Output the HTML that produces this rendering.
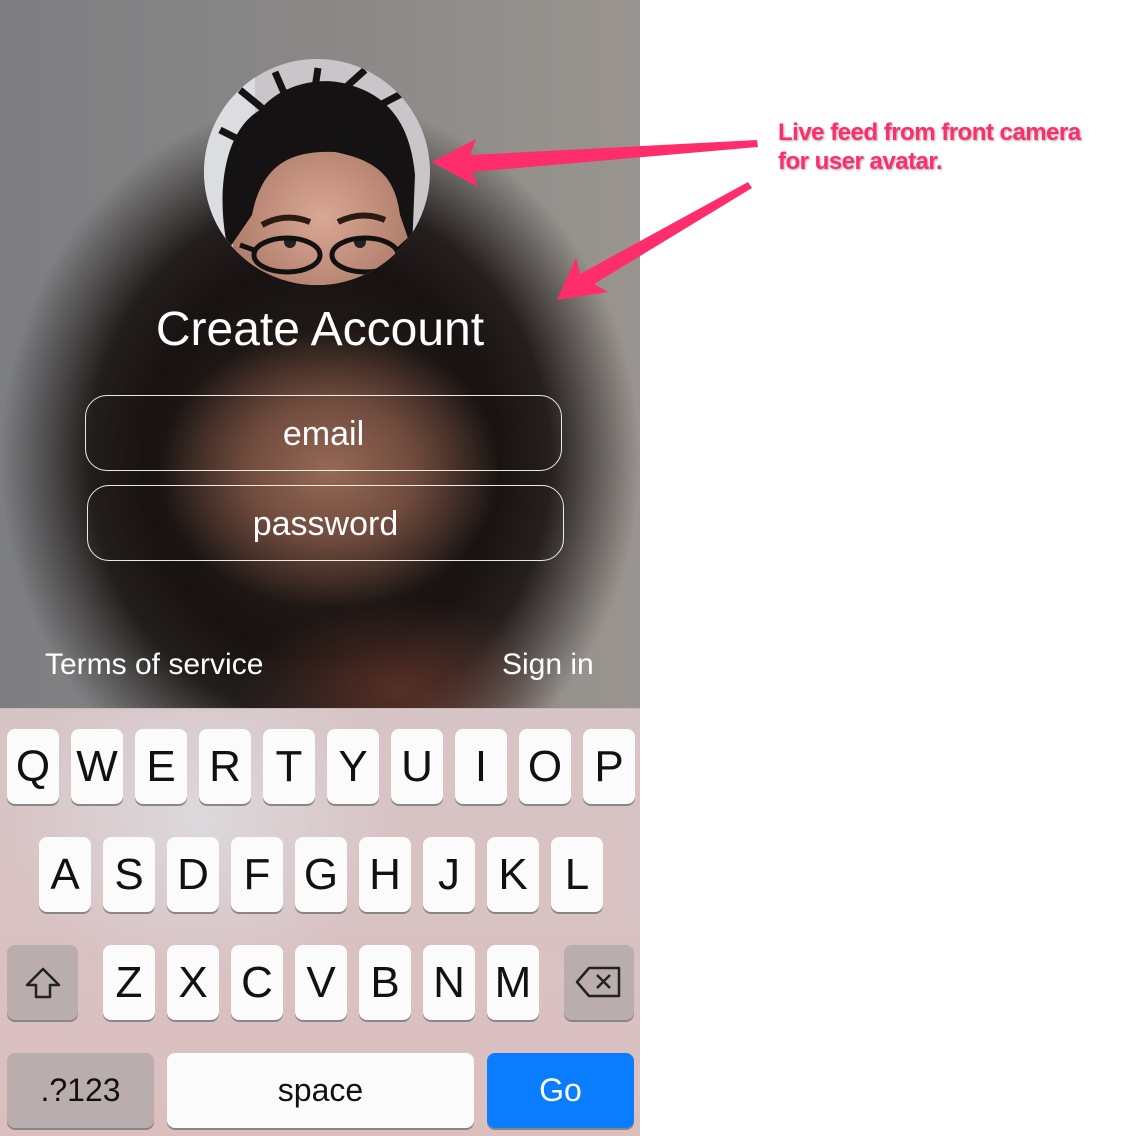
<!DOCTYPE html>
<html><head><style>
*{margin:0;padding:0;box-sizing:border-box}
body{width:1132px;height:1136px;background:#fff;position:relative;overflow:hidden;font-family:"Liberation Sans",sans-serif}
#app{position:absolute;left:0;top:0;width:640px;height:1136px;overflow:hidden}
#bg{position:absolute;left:0;top:0;width:640px;height:708px;
background:
radial-gradient(ellipse 170px 140px at 330px 470px, rgba(150,105,85,1) 0%, rgba(120,80,65,.9) 50%, rgba(120,80,65,0) 100%),
radial-gradient(ellipse 160px 90px at 400px 690px, rgba(95,50,40,.85), rgba(95,50,40,0)),
radial-gradient(ellipse 320px 360px at 320px 460px, #2a201c 0%, #181312 55%, rgba(24,19,18,0.9) 72%, rgba(24,19,18,0) 100%),
linear-gradient(90deg,#7d7e81 0%,#8a8887 50%,#99948f 100%);}
.t{position:absolute;color:#fff;font-weight:300}
.field{position:absolute;border:1.5px solid rgba(255,255,255,.9);border-radius:22px;color:#fff;text-align:center;font-size:34px;font-weight:300}
#kb{position:absolute;left:0;top:708px;width:640px;height:428px;
background:radial-gradient(ellipse 200px 160px at 200px 110px,#dcd9dc,rgba(220,217,220,0)),linear-gradient(180deg,#d7c4c6,#dbbfbf);border-top:1px solid #c9b9b9}
.k{position:absolute;width:52px;height:75px;background:#fbfbfb;border-radius:8px;box-shadow:0 2px 0 #8c8585;font-size:44px;text-align:center;line-height:75px;color:#111;font-weight:300}
.g{background:#b9adae}
</style></head><body>
<div id="app">
<div id="bg"></div>
<svg style="position:absolute;left:0;top:0" width="640" height="708">
<defs><clipPath id="c"><circle cx="317" cy="172" r="113"/></clipPath>
<radialGradient id="sk" cx="50%" cy="40%" r="60%"><stop offset="0" stop-color="#d9a894"/><stop offset="1" stop-color="#a97562"/></radialGradient></defs>
<g clip-path="url(#c)">
<rect x="200" y="55" width="240" height="240" fill="#c8c6c8"/>
<rect x="200" y="55" width="55" height="240" fill="#dcdde0"/>
<ellipse cx="322" cy="235" rx="90" ry="85" fill="url(#sk)"/>
<path d="M228 250 C215 190 225 130 260 110 C280 85 320 75 350 85 C385 95 410 120 415 175 L412 250 L400 215 C395 175 375 160 335 152 C290 150 262 165 252 215 Z" fill="#141212"/>
<path d="M262 108 L240 90 M285 95 L275 72 M315 88 L318 68 M345 88 L365 70 M380 105 L405 92 M240 140 L220 130" stroke="#141212" stroke-width="7"/>
<path d="M262 225 Q285 212 310 222 M338 222 Q362 210 385 220" stroke="#2a1a14" stroke-width="6" fill="none"/>
<circle cx="290" cy="242" r="6" fill="#222"/><circle cx="360" cy="242" r="6" fill="#222"/>
<ellipse cx="287" cy="255" rx="33" ry="17" fill="none" stroke="#111" stroke-width="5"/>
<ellipse cx="365" cy="255" rx="33" ry="17" fill="none" stroke="#111" stroke-width="5"/>
<path d="M240 245 L254 250 M398 250 L418 232" stroke="#111" stroke-width="5"/>
</g>
</svg>
<div class="t" style="left:0;width:640px;text-align:center;top:302px;font-size:48px">Create Account</div>
<div class="field" style="left:85px;top:395px;width:477px;height:76px;line-height:76px">email</div>
<div class="field" style="left:87px;top:485px;width:477px;height:76px;line-height:76px">password</div>
<div class="t" style="left:45px;top:648px;font-size:30px">Terms of service</div>
<div class="t" style="left:502px;top:648px;font-size:30px">Sign in</div>
<div id="kb">
<div class="k" style="left:7px;top:20px">Q</div><div class="k" style="left:71px;top:20px">W</div><div class="k" style="left:135px;top:20px">E</div><div class="k" style="left:199px;top:20px">R</div><div class="k" style="left:263px;top:20px">T</div><div class="k" style="left:327px;top:20px">Y</div><div class="k" style="left:391px;top:20px">U</div><div class="k" style="left:455px;top:20px">I</div><div class="k" style="left:519px;top:20px">O</div><div class="k" style="left:583px;top:20px">P</div>
<div class="k" style="left:39px;top:128px">A</div><div class="k" style="left:103px;top:128px">S</div><div class="k" style="left:167px;top:128px">D</div><div class="k" style="left:231px;top:128px">F</div><div class="k" style="left:295px;top:128px">G</div><div class="k" style="left:359px;top:128px">H</div><div class="k" style="left:423px;top:128px">J</div><div class="k" style="left:487px;top:128px">K</div><div class="k" style="left:551px;top:128px">L</div>
<div class="k g" style="left:7px;top:236px;width:71px"><svg width="40" height="40" style="margin-top:18px" viewBox="0 0 40 40"><path d="M20 6 L36 22 H27 V34 H13 V22 H4 Z" fill="none" stroke="#222" stroke-width="2.5" stroke-linejoin="round"/></svg></div>
<div class="k" style="left:103px;top:236px">Z</div><div class="k" style="left:167px;top:236px">X</div><div class="k" style="left:231px;top:236px">C</div><div class="k" style="left:295px;top:236px">V</div><div class="k" style="left:359px;top:236px">B</div><div class="k" style="left:423px;top:236px">N</div><div class="k" style="left:487px;top:236px">M</div>
<div class="k g" style="left:564px;top:236px;width:70px"><svg width="48" height="34" style="margin-top:20px" viewBox="0 0 48 34"><path d="M14 3 H44 V31 H14 L2 17 Z" fill="none" stroke="#222" stroke-width="2.5" stroke-linejoin="round"/><path d="M22 10 L35 23 M35 10 L22 23" stroke="#222" stroke-width="2.5"/></svg></div>
<div class="k g" style="left:7px;top:344px;width:147px;font-size:32px">.?123</div>
<div class="k" style="left:167px;top:344px;width:307px;font-size:32px">space</div>
<div class="k" style="left:487px;top:344px;width:147px;font-size:32px;background:#0a7cff;color:#fff">Go</div>
</div>
</div>
<svg style="position:absolute;left:0;top:0" width="1132" height="400">
<path d="M432 162 L476 139 L470 155 L757 140 L758 147 L472 172 L478 187 Z" fill="#ff2d6c"/>
<path d="M557 300 L576 258 L580 274 L748 182 L752 188 L594 284 L608 292 Z" fill="#ff2d6c"/>
</svg>
<div style="position:absolute;left:778px;top:118px;color:#ff2d6c;font-size:24px;font-weight:bold;line-height:29px;text-shadow:1px 1px 2px rgba(0,0,0,.35);letter-spacing:-0.5px">Live feed from front camera<br>for user avatar.</div>
</body></html>
